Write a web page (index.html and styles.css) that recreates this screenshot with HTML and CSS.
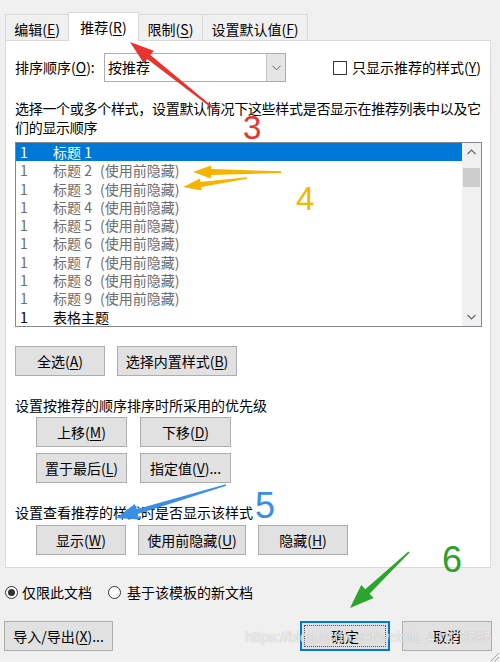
FILE: index.html
```html
<!DOCTYPE html>
<html lang="zh-CN">
<head>
<meta charset="utf-8">
<title>管理样式</title>
<link rel="stylesheet" href="styles.css">
</head>
<body>
<div class="dialog">
  <div class="tabs">
    <div class="tab t1">编辑(<u>E</u>)</div>
    <div class="tab t2 active">推荐(<u>R</u>)</div>
    <div class="tab t3">限制(<u>S</u>)</div>
    <div class="tab t4">设置默认值(<u>F</u>)</div>
  </div>
  <div class="panel">
    <div class="sort-row">
      <span class="sort-label">排序顺序(<u>O</u>):</span>
      <div class="combo">
        <span class="combo-text">按推荐</span>
        <span class="combo-btn"><svg width="9" height="6" viewBox="0 0 9 6"><path d="M0.5 0.8 L4.5 4.8 L8.5 0.8" fill="none" stroke="#606060" stroke-width="1"/></svg></span>
      </div>
      <div class="check"><span class="box"></span><span>只显示推荐的样式(<u>Y</u>)</span></div>
    </div>
    <p class="desc">选择一个或多个样式，设置默认情况下这些样式是否显示在推荐列表中以及它们的显示顺序</p>
    <div class="listbox">
      <div class="rows">
        <div class="row selected"><span class="num">1</span><span>标题 1</span></div>
        <div class="row dim"><span class="num">1</span><span>标题 2</span><span class="note">(使用前隐藏)</span></div>
        <div class="row dim"><span class="num">1</span><span>标题 3</span><span class="note">(使用前隐藏)</span></div>
        <div class="row dim"><span class="num">1</span><span>标题 4</span><span class="note">(使用前隐藏)</span></div>
        <div class="row dim"><span class="num">1</span><span>标题 5</span><span class="note">(使用前隐藏)</span></div>
        <div class="row dim"><span class="num">1</span><span>标题 6</span><span class="note">(使用前隐藏)</span></div>
        <div class="row dim"><span class="num">1</span><span>标题 7</span><span class="note">(使用前隐藏)</span></div>
        <div class="row dim"><span class="num">1</span><span>标题 8</span><span class="note">(使用前隐藏)</span></div>
        <div class="row dim"><span class="num">1</span><span>标题 9</span><span class="note">(使用前隐藏)</span></div>
        <div class="row"><span class="num">1</span><span>表格主题</span></div>
      </div>
      <div class="scrollbar">
        <span class="sb-arrow"><svg width="9" height="6" viewBox="0 0 9 6"><path d="M0.5 5 L4.5 1 L8.5 5" fill="none" stroke="#606060" stroke-width="1.1"/></svg></span>
        <span class="sb-thumb"></span>
        <span class="sb-track"></span>
        <span class="sb-arrow"><svg width="9" height="6" viewBox="0 0 9 6"><path d="M0.5 1 L4.5 5 L8.5 1" fill="none" stroke="#606060" stroke-width="1.1"/></svg></span>
      </div>
    </div>
    <div class="btn-row sel-row">
      <button class="btn w90">全选(<u>A</u>)</button>
      <button class="btn w120">选择内置样式(<u>B</u>)</button>
    </div>
    <p class="section-text">设置按推荐的顺序排序时所采用的优先级</p>
    <div class="order-grid">
      <button class="btn">上移(<u>M</u>)</button>
      <button class="btn">下移(<u>D</u>)</button>
      <button class="btn">置于最后(<u>L</u>)</button>
      <button class="btn">指定值(<u>V</u>)...</button>
    </div>
    <p class="section-text">设置查看推荐的样式时是否显示该样式</p>
    <div class="btn-row vis-row">
      <button class="btn w90">显示(<u>W</u>)</button>
      <button class="btn w108">使用前隐藏(<u>U</u>)</button>
      <button class="btn w90">隐藏(<u>H</u>)</button>
    </div>
  </div>
  <div class="scope">
    <span class="radio on"></span><span class="radio-label">仅限此文档</span>
    <span class="radio second"></span><span class="radio-label">基于该模板的新文档</span>
  </div>
  <div class="footer">
    <button class="btn w109">导入/导出(<u>X</u>)...</button>
    <span class="spacer"></span>
    <button class="btn w90 default">确定</button>
    <button class="btn w90">取消</button>
  </div>
  <div class="watermark">https://blog.csdn.net/weixin_43223595</div>
  <svg class="annotations" width="500" height="662" viewBox="0 0 500 662">
    <polygon fill="#e8342e" points="218.5,111.4 150.4,55.0 153.8,50.7 130,42 143.8,63.2 147.2,58.9 217.5,112.6"/>
    <text x="243" y="139" class="num-note" fill="#e8342e">3</text>
    <polygon fill="#f4b400" points="281,171.3 211,169 211,165.5 193,172 211,178.5 211,175 281,173"/>
    <polygon fill="#f4b400" points="246.9,177.2 200.45,182.0 200.0,178.6 183,187 201.6,190.4 201.15,187.0 247.1,178.8"/>
    <text x="296" y="210" class="num-note" fill="#f2b705">4</text>
    <polygon fill="#3a8ee6" points="225.8,484.2 136.4,509.3 134.8,504.0 116,518 139.4,519.4 137.8,514.1 226.2,485.8"/>
    <text x="255" y="518" class="num-note big" fill="#3a8ee6">5</text>
    <polygon fill="#2ca52c" points="408.4,551.4 365.3,589.3 361.2,585.0 350,608 373.6,598.0 369.5,593.7 409.6,552.6"/>
    <text x="442" y="572" class="num-note big" fill="#2ca02c">6</text>
    <g stroke="#a0a0a0" stroke-width="1">
      <line x1="491" y1="661" x2="499" y2="653"/>
      <line x1="495" y1="661" x2="499" y2="657"/>
    </g>
  </svg>
</div>
</body>
</html>
```
FILE: styles.css
```css
html, body {
  margin: 0;
  padding: 0;
}
body {
  background: #f0f0f0;
  font-family: "Noto Sans CJK SC", "Noto Sans", sans-serif;
  font-size: 14px;
  color: #000;
}
.dialog {
  position: relative;
  width: 500px;
  height: 662px;
  overflow: hidden;
}
u {
  text-decoration: underline;
  text-underline-offset: 2px;
}

/* tabs */
.tabs {
  display: flex;
  align-items: flex-end;
  height: 27px;
  padding: 13px 0 0 5px;
}
.tab {
  box-sizing: border-box;
  height: 26px;
  border: 1px solid #d9d9d9;
  border-bottom: none;
  background: #f0f0f0;
  display: flex;
  align-items: center;
  justify-content: center;
  margin-right: -1px;
  line-height: 18px;
  padding-top: 2px;
}
.t1 { width: 64px; }
.t2 { width: 71px; }
.t3 { width: 65px; }
.t4 { width: 106px; }
.tab.active {
  height: 29px;
  background: #fff;
  margin-bottom: -1px;
  position: relative;
  z-index: 1;
  padding-top: 0;
}

/* panel */
.panel {
  box-sizing: border-box;
  margin-left: 5px;
  width: 486px;
  height: 528px;
  background: #fff;
  border: 1px solid #d9d9d9;
  padding: 12px 9px 0;
}
.sort-row {
  display: flex;
  align-items: center;
  height: 29px;
}
.sort-label {
  width: 89px;
  line-height: 19px;
}
.combo {
  box-sizing: border-box;
  width: 182px;
  height: 29px;
  border: 1px solid #acacac;
  display: flex;
}
.combo-text {
  flex: 1;
  padding-left: 3px;
  line-height: 27px;
}
.combo-btn {
  width: 18px;
  background: #e5e5e5;
  border-left: 1px solid #c4c4c4;
  display: flex;
  align-items: center;
  justify-content: center;
}
.check {
  display: flex;
  align-items: center;
  margin-left: 47px;
  line-height: 19px;
}
.box {
  box-sizing: border-box;
  width: 14px;
  height: 14px;
  border: 1px solid #333;
  background: #fff;
  margin-right: 5px;
}
.desc {
  margin: 17px -8px 0 0;
  line-height: 19px;
  letter-spacing: -0.3px;
}

/* list */
.listbox {
  box-sizing: border-box;
  margin-top: 5px;
  width: 467px;
  height: 185px;
  border: 1px solid #828790;
  display: flex;
}
.rows {
  flex: 1;
}
.row {
  height: 18.3px;
  line-height: 18.3px;
  display: flex;
  white-space: nowrap;
}
.num {
  width: 37px;
  padding-left: 4px;
  box-sizing: border-box;
}
.note {
  margin-left: 8px;
}
.row.dim {
  color: #6d6d6d;
}
.row.selected {
  background: #0078d7;
  color: #fff;
}
.scrollbar {
  width: 19px;
  background: #f0f0f0;
  display: flex;
  flex-direction: column;
  align-items: center;
}
.sb-arrow {
  height: 18px;
  display: flex;
  align-items: center;
  justify-content: center;
}
.sb-thumb {
  width: 17px;
  height: 19px;
  margin-top: 7px;
  background: #cdcdcd;
}
.sb-track {
  flex: 1;
}

/* buttons */
.btn {
  box-sizing: border-box;
  height: 30px;
  background: #e1e1e1;
  border: 1px solid #adadad;
  font-family: inherit;
  font-size: 14px;
  color: #000;
  padding: 0;
  line-height: 18px;
}
.w90 { width: 90px; }
.w108 { width: 108px; }
.w109 { width: 109px; }
.w120 { width: 120px; }
.btn-row {
  display: flex;
  gap: 12px;
}
.sel-row {
  margin-top: 19px;
}
.section-text {
  margin: 20px 0 0;
  line-height: 19px;
}
.order-grid {
  display: grid;
  grid-template-columns: 91px 91px;
  column-gap: 13px;
  row-gap: 6px;
  margin-top: 2px;
  padding-left: 21px;
}
.vis-row {
  margin-top: 3px;
  padding-left: 21px;
}

/* scope radios */
.scope {
  display: flex;
  align-items: center;
  height: 20px;
  margin-top: 14px;
  padding-left: 5px;
}
.radio {
  box-sizing: border-box;
  width: 13px;
  height: 13px;
  border: 1px solid #333;
  border-radius: 50%;
  background: #fff;
  position: relative;
}
.radio.on::after {
  content: "";
  position: absolute;
  left: 2px;
  top: 2px;
  width: 7px;
  height: 7px;
  border-radius: 50%;
  background: #333;
}
.radio-label {
  margin-left: 4px;
  line-height: 19px;
}
.radio.second {
  margin-left: 16px;
}
.radio.second + .radio-label {
  margin-left: 6px;
}

/* footer */
.footer {
  display: flex;
  margin-top: 19px;
  padding-left: 4px;
  width: 488px;
  gap: 12px;
}
.spacer {
  flex: 1;
}
.btn.default {
  border: 2px solid #0078d7;
  position: relative;
}
.btn.default::after {
  content: "";
  position: absolute;
  left: 2px;
  top: 2px;
  right: 2px;
  bottom: 2px;
  border: 1px dotted #555;
}

.watermark {
  position: absolute;
  left: 245px;
  top: 629px;
  font-family: "Liberation Sans", sans-serif;
  font-size: 14.5px;
  color: rgba(255, 255, 255, 0.75);
  text-shadow: 0 0 1px rgba(120, 120, 120, 0.6);
  white-space: nowrap;
}

.annotations {
  position: absolute;
  left: 0;
  top: 0;
  pointer-events: none;
}
.num-note {
  font-family: "Liberation Sans", sans-serif;
  font-size: 33px;
}
.num-note.big {
  font-size: 36px;
}
```
